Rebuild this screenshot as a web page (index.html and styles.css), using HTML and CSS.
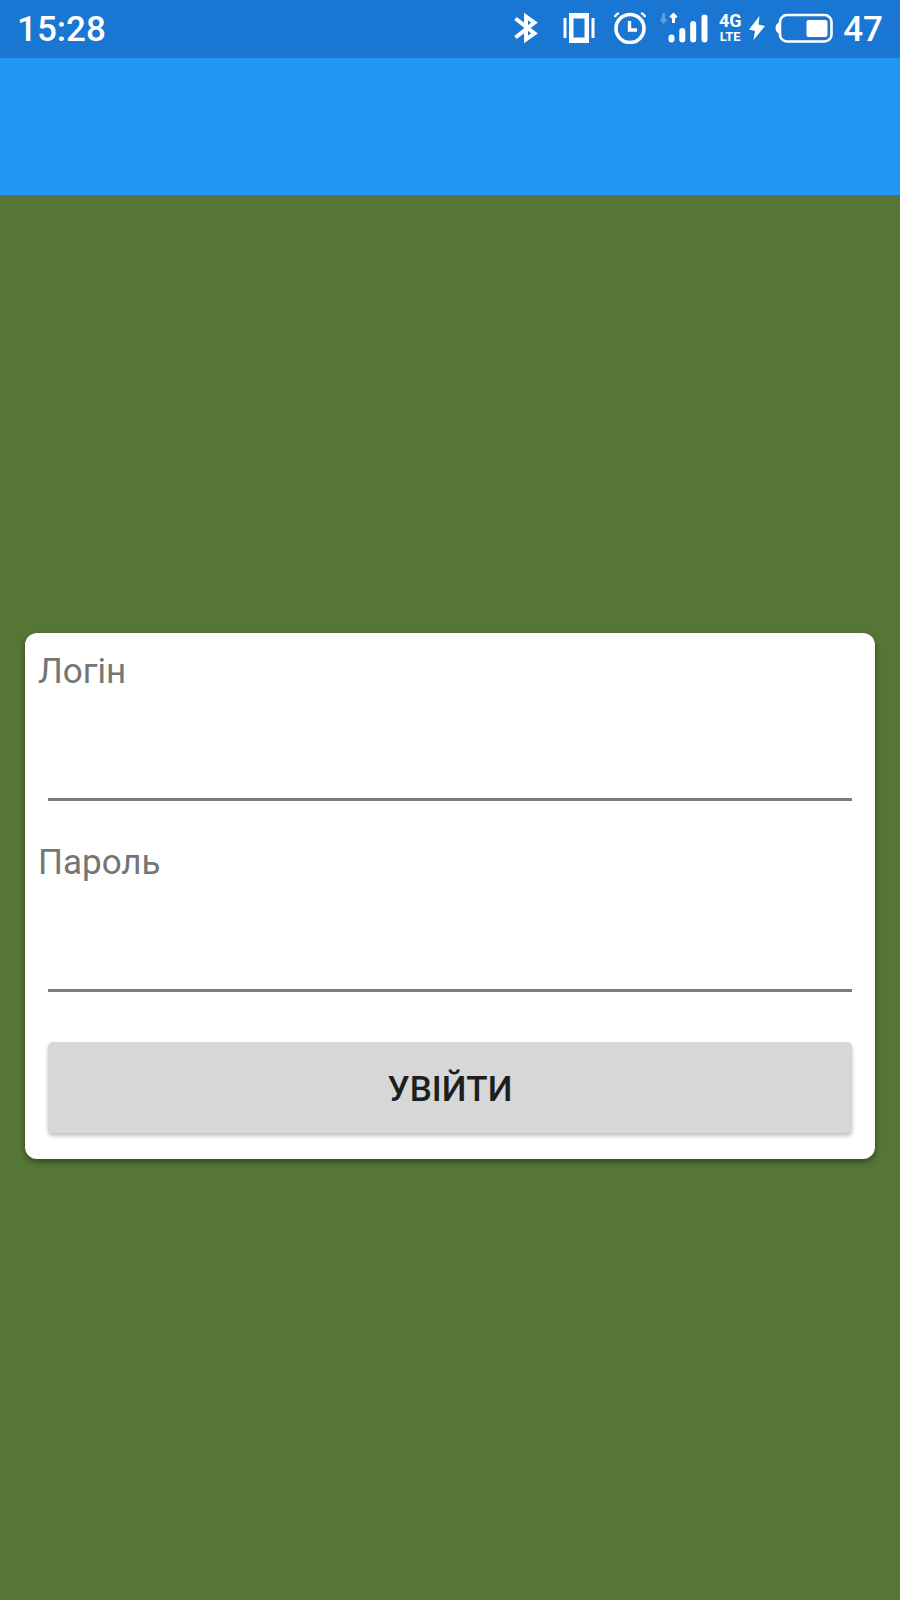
FILE: index.html
```html
<!DOCTYPE html>
<html lang="uk">
<head>
<meta charset="utf-8">
<meta name="viewport" content="width=device-width, initial-scale=1">
<title>Вхід</title>
<link rel="stylesheet" href="styles.css">
</head>
<body>
<div class="status-bar">
  <span class="clock">15:28</span>
  <div class="indicators">
    <svg class="icon bluetooth" width="24" height="32" viewBox="0 0 24 32" fill="none" stroke="#fff" stroke-width="4" aria-hidden="true"><path d="M1.500 6.500L20.500 21.500L12 27.500V4.500L20.500 10.500L1.500 25.500"/></svg>
    <svg class="icon vibrate" width="32" height="32" viewBox="0 0 32 32" fill="#fff" aria-hidden="true"><path fill-rule="evenodd" d="M6 1h20v30H6zM10.500 6.500v19h11v-19z"/><path d="M.5 6h3v20h-3zM28.500 6h3v20h-3z"/></svg>
    <svg class="icon alarm" width="32" height="32" viewBox="0 0 32 32" fill="none" stroke="#fff" aria-hidden="true"><circle cx="16" cy="16.500" r="14" stroke-width="3.600"/><path d="M15.500 9v9h7.500" stroke-width="3.400"/><path d="M.8 5Q2 2 5 1.200M31.200 5Q30 2 27 1.200" stroke-width="2.400"/></svg>
    <svg class="icon signal" width="48" height="32" viewBox="0 0 48 32" fill="none" stroke="#fff" aria-hidden="true"><path d="M3.500 1v9M.8 7L3.500 10L6.200 7" stroke-width="2.800" opacity=".3"/><path d="M13.500 11V2M10.500 5.500L13.500 2.500L16.500 5.500" stroke-width="3"/><path d="M11.500 25.500v2M22.300 19v8.500M33.200 12v15.500M44.500 5.500v22" stroke-width="6" stroke-linecap="round"/></svg>
    <span class="network"><span class="network-gen">4G</span><span class="network-type">LTE</span></span>
    <svg class="icon bolt" width="16" height="26" viewBox="0 0 16 26" fill="#fff" aria-hidden="true"><path d="M10.500 1L0 14.500L6 16L4.500 25L16 11L9.500 9.500z"/></svg>
    <svg class="icon battery" width="58" height="30" viewBox="0 0 58 30" fill="none" aria-hidden="true"><path d="M5 9Q.5 10.500 .5 15T5 21z" fill="#fff"/><rect x="5" y="2" width="51.500" height="26.500" rx="7" stroke="#fff" stroke-width="2.600"/><rect x="31.500" y="7" width="21" height="17" rx="2" fill="#fff"/></svg>
    <span class="charge">47</span>
  </div>
</div>
<header class="app-bar"></header>
<main class="screen">
  <form class="card">
    <label class="label" for="login">Логін</label>
    <input class="field" id="login" type="text" autocomplete="username">
    <label class="label" for="password">Пароль</label>
    <input class="field" id="password" type="password" autocomplete="current-password">
    <button class="submit" type="button">УВІЙТИ</button>
  </form>
</main>
</body>
</html>
```

FILE: styles.css
```css
* {
  box-sizing: border-box;
}

body {
  margin: 0;
  min-height: 100vh;
  display: flex;
  flex-direction: column;
  background: #567635;
  font-family: Roboto, "Noto Sans", sans-serif;
  font-size: 35px;
}

.status-bar {
  display: flex;
  align-items: center;
  justify-content: space-between;
  height: 58px;
  padding: 0 17px;
  background: #1976d2;
  color: #fff;
  font-weight: 500;
}

.indicators {
  display: flex;
  align-items: center;
}

.icon {
  margin-bottom: 3px;
}

.bluetooth {
  margin-right: 25px;
}

.vibrate {
  margin-right: 19px;
}

.alarm {
  margin-right: 14px;
}

.signal {
  margin-right: 11px;
}

.network {
  display: flex;
  flex-direction: column;
  align-items: center;
  width: 22px;
  margin-right: 8px;
  font-weight: 700;
}

.network-gen {
  font-size: 18px;
  line-height: 16px;
}

.network-type {
  font-size: 13px;
  line-height: 16px;
}

.bolt {
  margin-right: 10px;
}

.battery {
  margin-right: 10px;
}

.app-bar {
  height: 137px;
  background: #2196f3;
}

.screen {
  flex: 1;
  display: flex;
  flex-direction: column;
  justify-content: center;
  padding: 0 25px 3px;
}

.card {
  display: flex;
  flex-direction: column;
  padding: 13px 13px 26px;
  border-radius: 12px;
  background: #fff;
  box-shadow: 0 3px 6px rgba(0, 0, 0, 0.4);
}

.label {
  line-height: 52px;
  color: #757575;
}

.field {
  height: 103px;
  margin: 0 10px 36px;
  padding: 28px 0 0;
  border: 0;
  border-bottom: 3px solid #7b7b7b;
  border-radius: 0;
  background: transparent;
  color: #212121;
  font: inherit;
  outline: 0;
}

.submit {
  height: 91px;
  margin: 14px 10px 0;
  padding: 4px 0 0;
  border: 0;
  border-radius: 5px;
  background: #d6d8d7;
  color: #1d1f1e;
  font: inherit;
  font-weight: 500;
  box-shadow: 0 3px 4px rgba(0, 0, 0, 0.25);
}
```
